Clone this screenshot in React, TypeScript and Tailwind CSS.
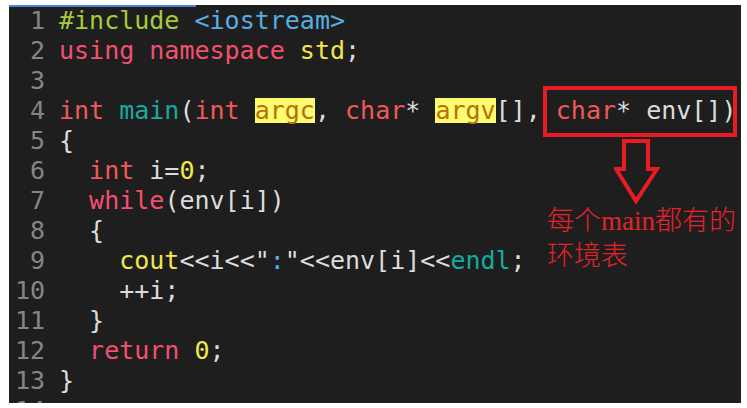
import React from "react";

const C = {
  inc: "text-[#a6cc3a]",
  blue: "text-[#56aee0]",
  pink: "text-[#f4506e]",
  yel: "text-[#f2e64c]",
  red: "text-[#f25858]",
  teal: "text-[#16aaa2]",
  w: "text-[#dcdcdc]",
};

function Hl({ children }: { children: React.ReactNode }) {
  return (
    <span className="inline-block h-[25px] leading-[25px] bg-[#fdfb6e] text-[#b8700c]">{children}</span>
  );
}

const lines: React.ReactNode[] = [
  <>
    <span className={C.inc}>#include</span> <span className={C.blue}>&lt;iostream&gt;</span>
  </>,
  <>
    <span className={C.pink}>using namespace</span> <span className={C.yel}>std</span>
    <span className={C.w}>;</span>
  </>,
  <></>,
  <>
    <span className={C.red}>int</span> <span className={C.teal}>main</span>
    <span className={C.w}>(</span>
    <span className={C.red}>int</span> <Hl>argc</Hl>
    <span className={C.w}>, </span>
    <span className={C.red}>char</span>
    <span className={C.w}>* </span>
    <Hl>argv</Hl>
    <span className={C.w}>[], </span>
    <span className={C.red}>char</span>
    <span className={C.w}>* env[])</span>
  </>,
  <span className={C.w}>{"{"}</span>,
  <>
    {"  "}
    <span className={C.red}>int</span>
    <span className={C.w}> i=</span>
    <span className={C.yel}>0</span>
    <span className={C.w}>;</span>
  </>,
  <>
    {"  "}
    <span className={C.pink}>while</span>
    <span className={C.w}>(env[i])</span>
  </>,
  <span className={C.w}>{"  {"}</span>,
  <>
    {"    "}
    <span className={C.yel}>cout</span>
    <span className={C.w}>&lt;&lt;i&lt;&lt;"</span>
    <span className={C.blue}>:</span>
    <span className={C.w}>"&lt;&lt;env[i]&lt;&lt;</span>
    <span className={C.teal}>endl</span>
    <span className={C.w}>;</span>
  </>,
  <span className={C.w}>{"    ++i;"}</span>,
  <span className={C.w}>{"  }"}</span>,
  <>
    {"  "}
    <span className={C.pink}>return</span> <span className={C.yel}>0</span>
    <span className={C.w}>;</span>
  </>,
  <span className={C.w}>{"}"}</span>,
  <></>,
];

export default function App() {
  return (
    <div className="w-[747px] h-[408px] bg-white pl-[9px] pr-[6px] pt-[5px] pb-[5px]">
      <div
        className="relative h-full bg-[#1e1e1e] overflow-hidden"
        style={{ fontFamily: '"DejaVu Sans Mono", monospace' }}
      >
        <div className="absolute left-0 top-0 h-[2px] w-[187px] bg-[#4f84dc]" />
        <div className="flex flex-col pt-[1px] text-[25px] leading-[30px]">
          {lines.map((l, i) => (
            <div key={i} className="flex h-[30px] whitespace-pre">
              <span className="w-[36px] text-right text-[#858585]">{i + 1}</span>
              <span className="ml-[14px]">{l}</span>
            </div>
          ))}
        </div>
        {/* red annotation box */}
        <div className="absolute left-[534px] top-[81px] w-[194px] h-[51px] border-[4px] border-[#e81c24]" />
        {/* arrow */}
        <svg
          className="absolute left-[605px] top-[134px]"
          width="46"
          height="66"
          viewBox="0 0 46 66"
        >
          <path
            d="M10 2 H34 V30 H43 L22 62 L2 30 H10 Z"
            fill="none"
            stroke="#e81c24"
            strokeWidth="4"
            strokeLinejoin="miter"
          />
        </svg>
        <div
          className="absolute left-[538px] top-[199px] text-[27px] leading-[35px] font-light text-[#e6222a]"
          style={{ fontFamily: '"Liberation Serif", "Noto Sans CJK SC", serif' }}
        >
          <div>每个main都有的</div>
          <div>环境表</div>
        </div>
      </div>
    </div>
  );
}
